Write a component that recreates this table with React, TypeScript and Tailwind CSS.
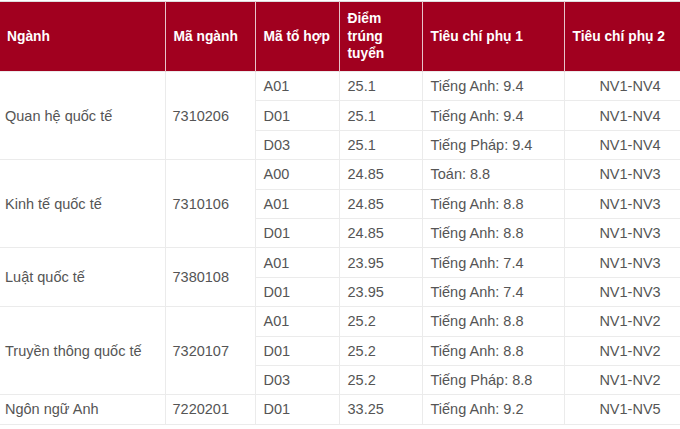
import React from 'react';

type Sub = { khoi: string; diem: string; tc1: string; tc2: string };
type Nganh = { ten: string; ma: string; subs: Sub[] };

const DATA: Nganh[] = [
  {
    ten: 'Quan hệ quốc tế',
    ma: '7310206',
    subs: [
      { khoi: 'A01', diem: '25.1', tc1: 'Tiếng Anh: 9.4', tc2: 'NV1-NV4' },
      { khoi: 'D01', diem: '25.1', tc1: 'Tiếng Anh: 9.4', tc2: 'NV1-NV4' },
      { khoi: 'D03', diem: '25.1', tc1: 'Tiếng Pháp: 9.4', tc2: 'NV1-NV4' },
    ],
  },
  {
    ten: 'Kinh tế quốc tế',
    ma: '7310106',
    subs: [
      { khoi: 'A00', diem: '24.85', tc1: 'Toán: 8.8', tc2: 'NV1-NV3' },
      { khoi: 'A01', diem: '24.85', tc1: 'Tiếng Anh: 8.8', tc2: 'NV1-NV3' },
      { khoi: 'D01', diem: '24.85', tc1: 'Tiếng Anh: 8.8', tc2: 'NV1-NV3' },
    ],
  },
  {
    ten: 'Luật quốc tế',
    ma: '7380108',
    subs: [
      { khoi: 'A01', diem: '23.95', tc1: 'Tiếng Anh: 7.4', tc2: 'NV1-NV3' },
      { khoi: 'D01', diem: '23.95', tc1: 'Tiếng Anh: 7.4', tc2: 'NV1-NV3' },
    ],
  },
  {
    ten: 'Truyền thông quốc tế',
    ma: '7320107',
    subs: [
      { khoi: 'A01', diem: '25.2', tc1: 'Tiếng Anh: 8.8', tc2: 'NV1-NV2' },
      { khoi: 'D01', diem: '25.2', tc1: 'Tiếng Anh: 8.8', tc2: 'NV1-NV2' },
      { khoi: 'D03', diem: '25.2', tc1: 'Tiếng Pháp: 8.8', tc2: 'NV1-NV2' },
    ],
  },
  {
    ten: 'Ngôn ngữ Anh',
    ma: '7220201',
    subs: [{ khoi: 'D01', diem: '33.25', tc1: 'Tiếng Anh: 9.2', tc2: 'NV1-NV5' }],
  },
];

const th = 'border-x border-[#e7c3c9] text-left align-middle font-bold px-2 whitespace-nowrap';
const td = 'border border-[#ebebeb] align-middle px-2 py-0';

export default function App() {
  return (
    <div className="w-[680px] h-[429px] overflow-hidden bg-white font-['Liberation_Sans',Arial,sans-serif]">
      <table className="w-[696px] table-fixed border-collapse border-t border-[#dddddd] mt-[1px]">
        <colgroup>
          <col className="w-[165px]" />
          <col className="w-[90px]" />
          <col className="w-[84px]" />
          <col className="w-[83px]" />
          <col className="w-[142px]" />
          <col className="w-[132px]" />
        </colgroup>
        <thead>
          <tr className="h-[70px] bg-[#a1001f] text-white text-[13.8px] leading-[17.5px]">
            <th className={`${th} pl-[7px] border-l-0`}>Ngành</th>
            <th className={th}>Mã ngành</th>
            <th className={`${th} pr-0`}>Mã tổ hợp</th>
            <th className={th}>
              Điểm
              <br />
              trúng
              <br />
              tuyển
            </th>
            <th className={th}>Tiêu chí phụ 1</th>
            <th className={th}>Tiêu chí phụ 2</th>
          </tr>
        </thead>
        <tbody className="text-[14.5px] text-[#555555] leading-[18px]">
          {DATA.map((n) =>
            n.subs.map((s, i) => (
              <tr key={n.ma + s.khoi} className="h-[29.4px]">
                {i === 0 && (
                  <>
                    <td rowSpan={n.subs.length} className={`${td} pl-[5px] border-l-0`}>
                      {n.ten}
                    </td>
                    <td rowSpan={n.subs.length} className={`${td} pl-[7px]`}>
                      {n.ma}
                    </td>
                  </>
                )}
                <td className={td}>{s.khoi}</td>
                <td className={td}>{s.diem}</td>
                <td className={td}>{s.tc1}</td>
                <td className={`${td} text-center`}>{s.tc2}</td>
              </tr>
            ))
          )}
        </tbody>
      </table>
    </div>
  );
}
